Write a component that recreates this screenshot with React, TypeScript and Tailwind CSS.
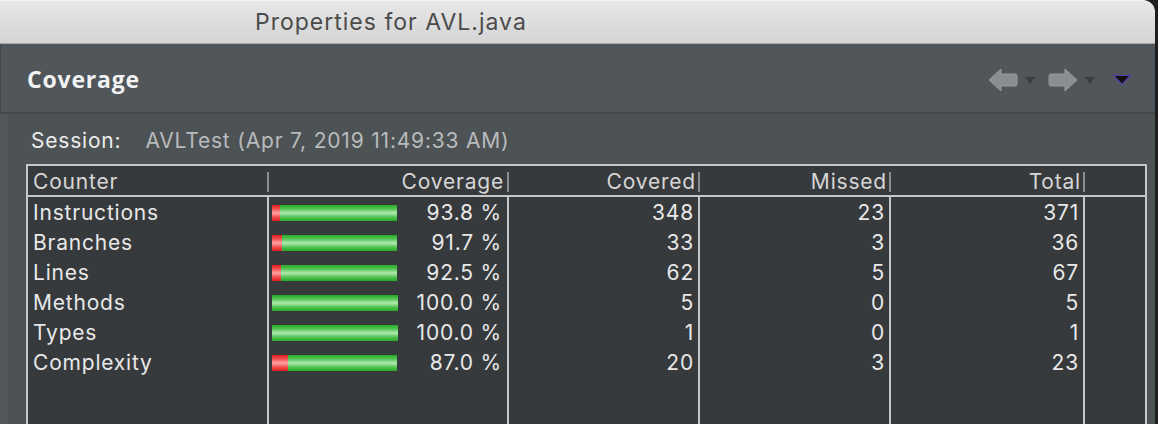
const rows = [
  { name: "Instructions", pct: "93.8 %", covered: 348, missed: 23, total: 371 },
  { name: "Branches", pct: "91.7 %", covered: 33, missed: 3, total: 36 },
  { name: "Lines", pct: "92.5 %", covered: 62, missed: 5, total: 67 },
  { name: "Methods", pct: "100.0 %", covered: 5, missed: 0, total: 5 },
  { name: "Types", pct: "100.0 %", covered: 1, missed: 0, total: 1 },
  { name: "Complexity", pct: "87.0 %", covered: 20, missed: 3, total: 23 },
];

const green = "linear-gradient(to bottom, #26a926, #55c455 25%, #b2e9b2 50%, #55c455 75%, #26a926)";
const red = "linear-gradient(to bottom, #e01c1c, #f05050 25%, #ffa3a3 50%, #f05050 75%, #e01c1c)";

function Bar({ missed, total }: { missed: number; total: number }) {
  const full = missed === 0;
  const width = full ? 126 : 125;
  const redW = Math.round((missed / total) * 125);
  return (
    <div className="flex h-[16px]" style={{ width }}>
      {redW > 0 && <div className="h-full" style={{ width: redW, background: red }} />}
      <div className="h-full flex-1" style={{ background: green }} />
    </div>
  );
}

function ArrowLeft() {
  return (
    <svg width="30" height="24" viewBox="0 0 30 24">
      <path d="M1 12 L13 1 L13 6 L27 6 Q29 6 29 8 L29 16 Q29 18 27 18 L13 18 L13 23 Z" fill="#8b8e91" stroke="#979a9d" strokeWidth="1" />
    </svg>
  );
}

function ArrowRight() {
  return (
    <svg width="30" height="24" viewBox="0 0 30 24">
      <path d="M29 12 L17 1 L17 6 L3 6 Q1 6 1 8 L1 16 Q1 18 3 18 L17 18 L17 23 Z" fill="#8b8e91" stroke="#979a9d" strokeWidth="1" />
    </svg>
  );
}

function SmallTri() {
  return (
    <svg width="10" height="7" viewBox="0 0 10 7">
      <path d="M0 0 L10 0 L5 7 Z" fill="#3b3e41" />
    </svg>
  );
}

function HeadSep() {
  return <div className="absolute right-0 top-[6px] h-[20px] w-[2px] bg-[#8a8c8e]" />;
}

export default function App() {
  return (
    <div className="w-[1158px] h-[424px] overflow-hidden bg-[#1e1e1e] flex font-['Inter','Liberation_Sans',sans-serif]">
      <div className="w-[1155px] h-full flex flex-col rounded-tr-[12px] overflow-hidden">
        {/* title bar */}
        <div className="h-[44px] shrink-0 flex items-center pl-[255px] border-t border-[#f5f5f5] border-b border-b-[#a8a8a8] bg-gradient-to-b from-[#e8e8e8] to-[#d4d4d4]">
          <span className="text-[23px] text-[#4b4b4b] tracking-[1px]">Properties for AVL.java</span>
        </div>

        {/* view header */}
        <div className="h-[70px] shrink-0 flex items-center justify-between bg-[#51565a] border-l border-[#45494c] border-b-[2px] border-b-[#46494c] pl-[26px] pr-[24px]">
          <span className="font-['Open_Sans',sans-serif] font-bold text-[23px] tracking-[0.8px] text-[#f2f2f2] pt-[2px]">Coverage</span>
          <div className="flex items-center pt-[3px]">
            <ArrowLeft />
            <div className="ml-[7px] mt-[1px]"><SmallTri /></div>
            <div className="ml-[13px]"><ArrowRight /></div>
            <div className="ml-[7px] mt-[1px]"><SmallTri /></div>
            <svg className="ml-[18px]" width="18" height="10" viewBox="0 0 18 10">
              <path d="M0.5 0.5 L17.5 0.5 L9 9.5 Z" fill="#111" stroke="#5b3fb2" strokeWidth="1.2" />
            </svg>
          </div>
        </div>

        {/* content */}
        <div className="flex-1 flex flex-col bg-[#4d5255] border-l-[8px] border-[#52575a] pr-[8px] text-[21px] tracking-[0.8px]">
          <div className="h-[50px] shrink-0 flex items-center pl-[23px] pt-[4px]">
            <span className="text-[#ececec]">Session:</span>
            <span className="ml-[24px] text-[#b9bbbd]">AVLTest (Apr 7, 2019 11:49:33 AM)</span>
          </div>

          <div className="ml-[18px] flex-1 flex flex-col bg-[#363a3d] border-[2px] border-b-0 border-[#c6c6c6] text-[#e8e8e8]">
            {/* header */}
            <div className="h-[31px] shrink-0 grid grid-cols-[241px_240px_191px_191px_194px_1fr] border-b-[2px] border-[#c6c6c6] text-[#d6d6d6]">
              <div className="relative flex items-center pl-[5px]">Counter<HeadSep /></div>
              <div className="relative flex items-center justify-end pr-[5px]">Coverage<HeadSep /></div>
              <div className="relative flex items-center justify-end pr-[4px]">Covered<HeadSep /></div>
              <div className="relative flex items-center justify-end pr-[4px]">Missed<HeadSep /></div>
              <div className="relative flex items-center justify-end pr-[4px]">Total<HeadSep /></div>
              <div />
            </div>

            {/* body */}
            <div className="flex-1 grid grid-cols-[241px_240px_191px_191px_194px_1fr]">
              <div className="flex flex-col border-r-[2px] border-[#c6c6c6] pt-[1px]">
                {rows.map((r) => (
                  <div key={r.name} className="h-[30px] flex items-center pl-[5px]">{r.name}</div>
                ))}
              </div>
              <div className="flex flex-col border-r-[2px] border-[#c6c6c6] pt-[1px]">
                {rows.map((r) => (
                  <div key={r.name} className="h-[30px] flex items-center justify-between pl-[3px] pr-[5px]">
                    <Bar missed={r.missed} total={r.total} />
                    <span>{r.pct}</span>
                  </div>
                ))}
              </div>
              <div className="flex flex-col border-r-[2px] border-[#c6c6c6] pt-[1px]">
                {rows.map((r) => (
                  <div key={r.name} className="h-[30px] flex items-center justify-end pr-[4px]">{r.covered}</div>
                ))}
              </div>
              <div className="flex flex-col border-r-[2px] border-[#c6c6c6] pt-[1px]">
                {rows.map((r) => (
                  <div key={r.name} className="h-[30px] flex items-center justify-end pr-[4px]">{r.missed}</div>
                ))}
              </div>
              <div className="flex flex-col border-r-[2px] border-[#c6c6c6] pt-[1px]">
                {rows.map((r) => (
                  <div key={r.name} className="h-[30px] flex items-center justify-end pr-[4px]">{r.total}</div>
                ))}
              </div>
              <div />
            </div>
          </div>
        </div>
      </div>
    </div>
  );
}
